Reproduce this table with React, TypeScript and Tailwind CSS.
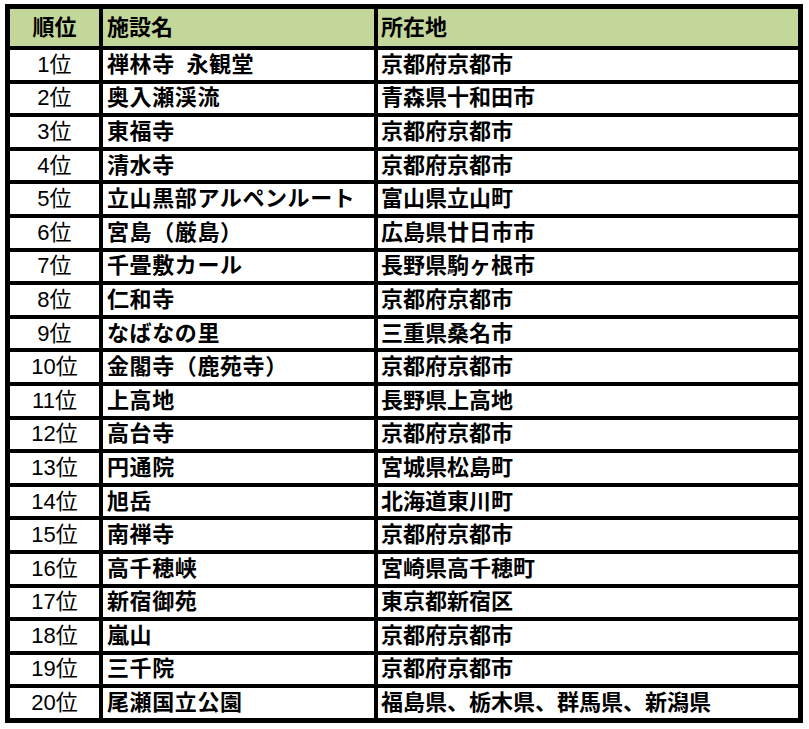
const ROWS: [string, string][] = [
  ["禅林寺\u2002永観堂", "京都府京都市"],
  ["奥入瀬渓流", "青森県十和田市"],
  ["東福寺", "京都府京都市"],
  ["清水寺", "京都府京都市"],
  ["立山黒部アルペンルート", "富山県立山町"],
  ["宮島（厳島）", "広島県廿日市市"],
  ["千畳敷カール", "長野県駒ヶ根市"],
  ["仁和寺", "京都府京都市"],
  ["なばなの里", "三重県桑名市"],
  ["金閣寺（鹿苑寺）", "京都府京都市"],
  ["上高地", "長野県上高地"],
  ["高台寺", "京都府京都市"],
  ["円通院", "宮城県松島町"],
  ["旭岳", "北海道東川町"],
  ["南禅寺", "京都府京都市"],
  ["高千穂峡", "宮崎県高千穂町"],
  ["新宿御苑", "東京都新宿区"],
  ["嵐山", "京都府京都市"],
  ["三千院", "京都府京都市"],
  ["尾瀬国立公園", "福島県、栃木県、群馬県、新潟県"],
];

const jp = "font-['Liberation_Sans','Noto_Sans_CJK_JP',sans-serif]";

export default function App() {
  return (
    <div className="bg-white w-[809px] h-[729px] pt-[4px] pl-[5px]">
      <div
        className={`${jp} w-[798px] bg-black p-[5px] grid grid-cols-[89px_271px_420px] gap-[4px] text-black`}
      >
        <div className="h-[37px] bg-[#c4d79b] flex items-center justify-center text-[22px] font-bold">
          順位
        </div>
        <div className="h-[37px] bg-[#c4d79b] flex items-center pl-[4px] text-[22px] font-bold">
          施設名
        </div>
        <div className="h-[37px] bg-[#c4d79b] flex items-center pl-[3px] text-[22px] font-bold">
          所在地
        </div>

        {ROWS.map(([name, place], i) => (
          <div key={i} className="contents">
            <div className="h-[29.6px] bg-white flex items-center justify-center text-[22px] leading-none">
              {i + 1}位
            </div>
            <div className="h-[29.6px] bg-white flex items-center pl-[4px] text-[22px] font-bold leading-none tracking-[0.6px] whitespace-pre">
              {name}
            </div>
            <div className="h-[29.6px] bg-white flex items-center pl-[3px] text-[22px] font-bold leading-none">
              {place}
            </div>
          </div>
        ))}
      </div>
    </div>
  );
}
